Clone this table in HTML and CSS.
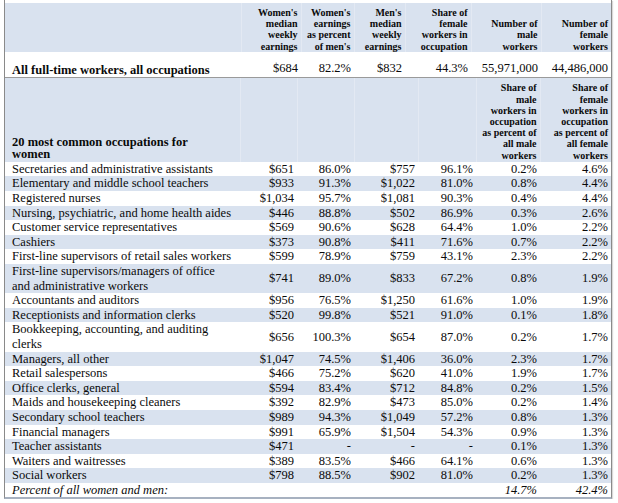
FILE: index.html
```html
<!DOCTYPE html>
<html>
<head>
<meta charset="utf-8">
<link rel="stylesheet" href="styles.css">
</head>
<body>
<div class="frame">
  <table class="tbl top">
    <colgroup>
      <col class="w-name-top"><col class="w60"><col class="w53"><col class="w51"><col class="w66"><col class="w70"><col class="w70">
    </colgroup>
    <tr class="hdr">
      <th></th>
      <th>Women's<br>median<br>weekly<br>earnings</th>
      <th>Women's<br>earnings<br>as percent<br>of men's</th>
      <th>Men's<br>median<br>weekly<br>earnings</th>
      <th>Share of<br>female<br>workers in<br>occupation</th>
      <th>Number of<br>male<br>workers</th>
      <th>Number of<br>female<br>workers</th>
    </tr>
    <tr class="allrow">
      <td class="name bold">All full-time workers, all occupations</td>
      <td>$684</td><td>82.2%</td><td>$832</td><td>44.3%</td><td>55,971,000</td><td>44,486,000</td>
    </tr>
  </table>
  <table class="tbl bottom">
    <colgroup>
      <col class="w-name"><col class="w57"><col class="w57"><col class="w64"><col class="w58"><col class="w64"><col class="w71">
    </colgroup>
    <tr class="hdr">
      <th class="name title">20 most common occupations for women</th>
      <th></th><th></th><th></th><th></th>
      <th>Share of<br>male<br>workers in<br>occupation<br>as percent of<br>all male<br>workers</th>
      <th>Share of<br>female<br>workers in<br>occupation<br>as percent of<br>all female<br>workers</th>
    </tr>
    <tr><td class="name">Secretaries and administrative assistants</td><td>$651</td><td>86.0%</td><td>$757</td><td>96.1%</td><td>0.2%</td><td>4.6%</td></tr>
    <tr class="alt"><td class="name">Elementary and middle school teachers</td><td>$933</td><td>91.3%</td><td>$1,022</td><td>81.0%</td><td>0.8%</td><td>4.4%</td></tr>
    <tr><td class="name">Registered nurses</td><td>$1,034</td><td>95.7%</td><td>$1,081</td><td>90.3%</td><td>0.4%</td><td>4.4%</td></tr>
    <tr class="alt"><td class="name">Nursing, psychiatric, and home health aides</td><td>$446</td><td>88.8%</td><td>$502</td><td>86.9%</td><td>0.3%</td><td>2.6%</td></tr>
    <tr><td class="name">Customer service representatives</td><td>$569</td><td>90.6%</td><td>$628</td><td>64.4%</td><td>1.0%</td><td>2.2%</td></tr>
    <tr class="alt"><td class="name">Cashiers</td><td>$373</td><td>90.8%</td><td>$411</td><td>71.6%</td><td>0.7%</td><td>2.2%</td></tr>
    <tr><td class="name">First-line supervisors of retail sales workers</td><td>$599</td><td>78.9%</td><td>$759</td><td>43.1%</td><td>2.3%</td><td>2.2%</td></tr>
    <tr class="alt"><td class="name">First-line supervisors/managers of office and administrative workers</td><td>$741</td><td>89.0%</td><td>$833</td><td>67.2%</td><td>0.8%</td><td>1.9%</td></tr>
    <tr><td class="name">Accountants and auditors</td><td>$956</td><td>76.5%</td><td>$1,250</td><td>61.6%</td><td>1.0%</td><td>1.9%</td></tr>
    <tr class="alt"><td class="name">Receptionists and information clerks</td><td>$520</td><td>99.8%</td><td>$521</td><td>91.0%</td><td>0.1%</td><td>1.8%</td></tr>
    <tr><td class="name">Bookkeeping, accounting, and auditing clerks</td><td>$656</td><td>100.3%</td><td>$654</td><td>87.0%</td><td>0.2%</td><td>1.7%</td></tr>
    <tr class="alt"><td class="name">Managers, all other</td><td>$1,047</td><td>74.5%</td><td>$1,406</td><td>36.0%</td><td>2.3%</td><td>1.7%</td></tr>
    <tr><td class="name">Retail salespersons</td><td>$466</td><td>75.2%</td><td>$620</td><td>41.0%</td><td>1.9%</td><td>1.7%</td></tr>
    <tr class="alt"><td class="name">Office clerks, general</td><td>$594</td><td>83.4%</td><td>$712</td><td>84.8%</td><td>0.2%</td><td>1.5%</td></tr>
    <tr><td class="name">Maids and housekeeping cleaners</td><td>$392</td><td>82.9%</td><td>$473</td><td>85.0%</td><td>0.2%</td><td>1.4%</td></tr>
    <tr class="alt"><td class="name">Secondary school teachers</td><td>$989</td><td>94.3%</td><td>$1,049</td><td>57.2%</td><td>0.8%</td><td>1.3%</td></tr>
    <tr><td class="name">Financial managers</td><td>$991</td><td>65.9%</td><td>$1,504</td><td>54.3%</td><td>0.9%</td><td>1.3%</td></tr>
    <tr class="alt"><td class="name">Teacher assistants</td><td>$471</td><td>-</td><td>-</td><td>-</td><td>0.1%</td><td>1.3%</td></tr>
    <tr><td class="name">Waiters and waitresses</td><td>$389</td><td>83.5%</td><td>$466</td><td>64.1%</td><td>0.6%</td><td>1.3%</td></tr>
    <tr class="alt"><td class="name">Social workers</td><td>$798</td><td>88.5%</td><td>$902</td><td>81.0%</td><td>0.2%</td><td>1.3%</td></tr>
    <tr class="pct"><td class="name">Percent of all women and men:</td><td></td><td></td><td></td><td></td><td>14.7%</td><td>42.4%</td></tr>
  </table>
</div>
</body>
</html>
```
FILE: styles.css
```css
html, body {
  margin: 0;
  padding: 0;
  background: #ffffff;
}
body {
  font-family: "Liberation Serif", "Times New Roman", serif;
  color: #0a0a0a;
}
.frame {
  width: 606px;
  margin-left: 4px;
  padding-top: 3px;
  border-left: 1px solid #8a8a8a;
  border-right: 1px solid #8a8a8a;
  border-bottom: 2px solid #a7b1c0;
  box-shadow: 1px 1px 1px rgba(0,0,0,0.15);
}
.tbl {
  width: 606px;
  border-collapse: collapse;
  table-layout: fixed;
}
.tbl td, .tbl th {
  padding: 0 3px 0 0;
  text-align: right;
  font-size: 12.5px;
  line-height: 14.6px;
  white-space: nowrap;
}
.tbl .name {
  text-align: left;
  padding-left: 7px;
  padding-right: 7px;
  white-space: normal;
}
.w-name-top { width: 236px; }
.w-name { width: 235px; }
.w51 { width: 51px; }
.w53 { width: 53px; }
.w57 { width: 57px; }
.w58 { width: 58px; }
.w60 { width: 60px; }
.w64 { width: 64px; }
.w66 { width: 66px; }
.w70 { width: 70px; }
.w71 { width: 71px; }

.hdr th {
  background: #d9e2ef;
  font-size: 10px;
  line-height: 11.2px;
  font-weight: bold;
  vertical-align: bottom;
  border-right: 1px solid #e3e9f3;
  padding-top: 4px;
  padding-bottom: 0;
}
.hdr th:last-child { border-right: none; }
.top .hdr th { padding-top: 4px; }
.allrow td {
  vertical-align: top;
  padding-top: 9px;
  padding-bottom: 2px;
}
.allrow td.name {
  padding-top: 11px;
  padding-bottom: 0;
}
.bold { font-weight: bold; }
.top {
  border-bottom: 1px solid #9a9a9a;
}
.hdr th.title {
  font-size: 12.5px;
  line-height: 12.5px;
  text-align: left;
  padding-left: 7px;
  white-space: normal;
  padding-right: 40px;
  padding-bottom: 1px;
}
.bottom .hdr th { padding-bottom: 1px; }
.tbl tr.alt td {
  background: #d9e2ef;
}
.tbl td { vertical-align: middle; }
.pct td { font-style: italic; }
```
